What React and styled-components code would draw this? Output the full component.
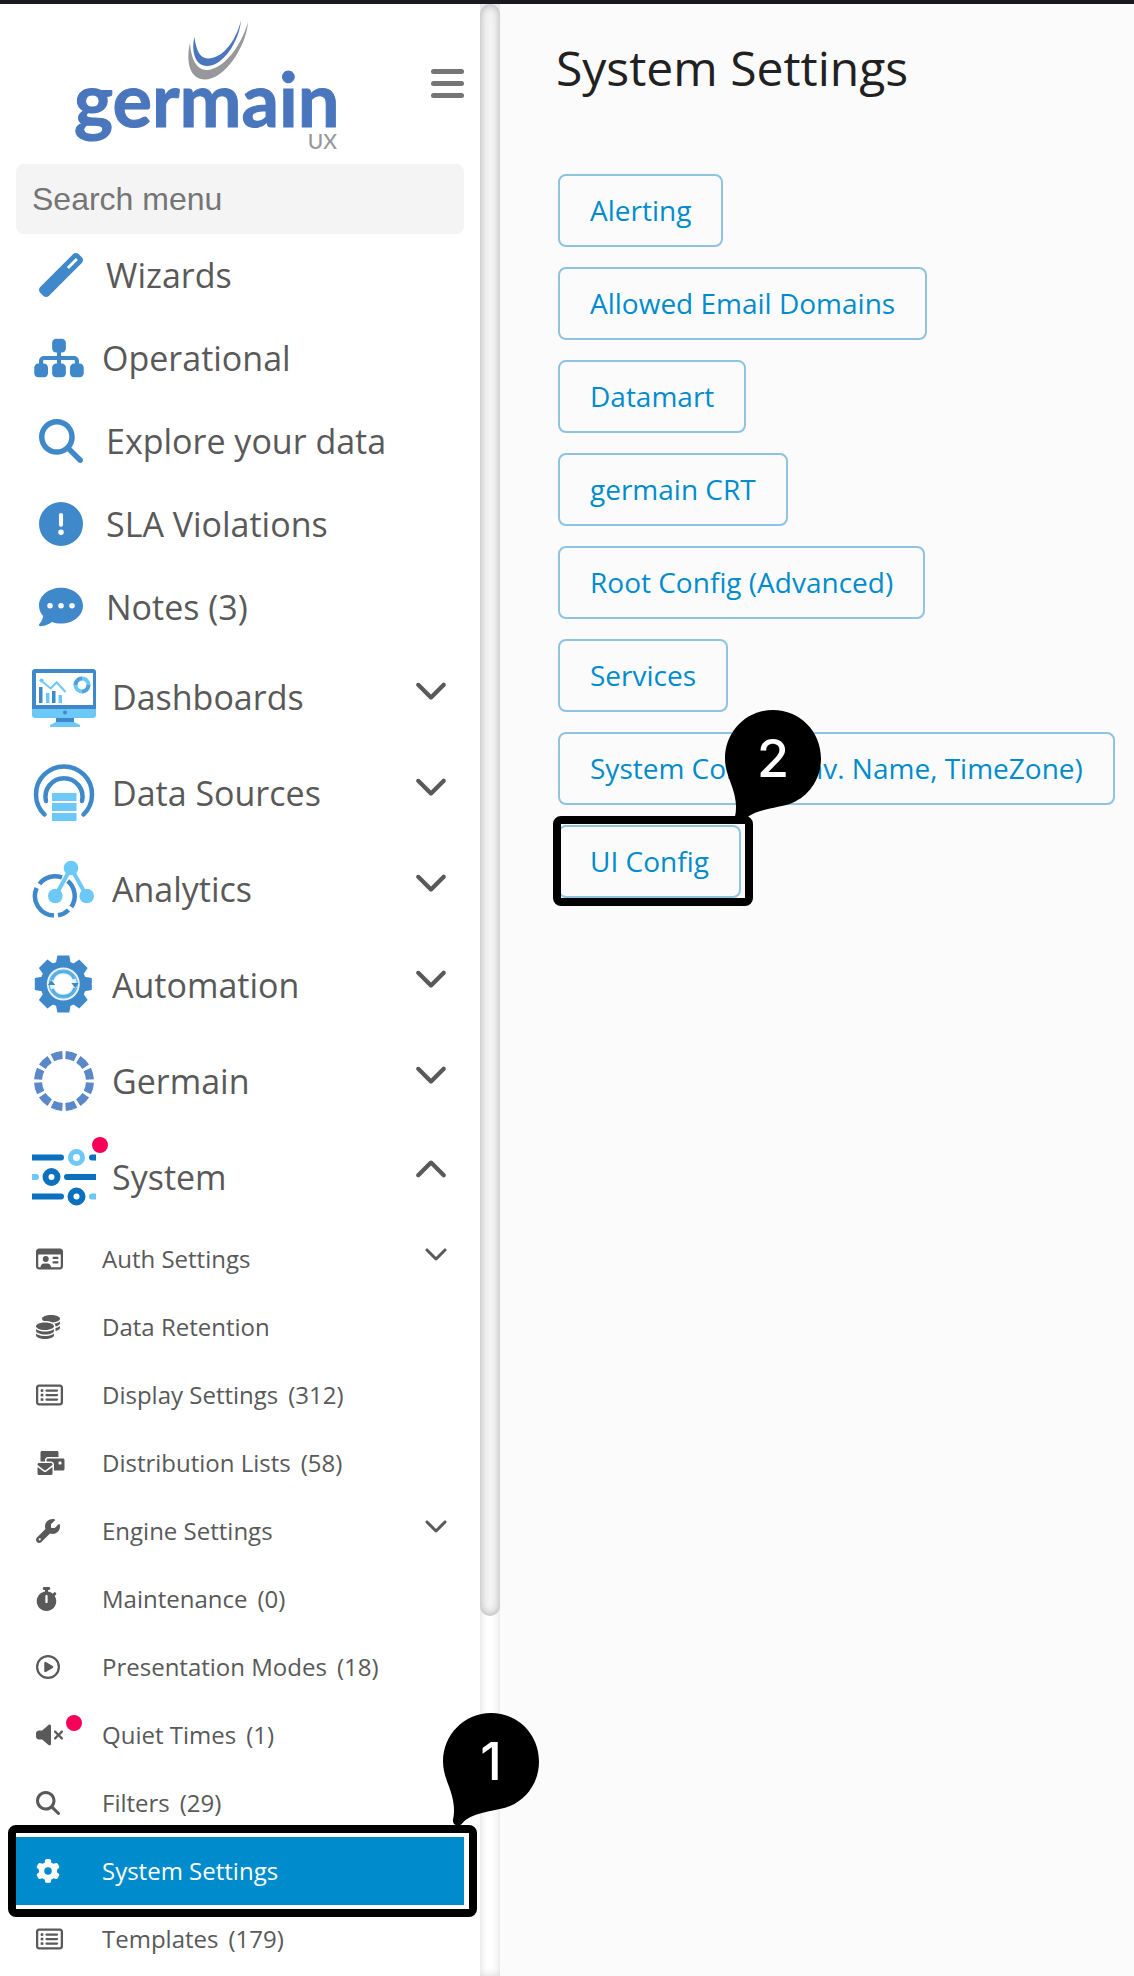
import React from "react";
import styled, { createGlobalStyle } from "styled-components";
import {
  FaWandMagic,
  FaSitemap,
  FaMagnifyingGlass,
  FaCircleExclamation,
  FaCommentDots,
  FaRegIdCard,
  FaCoins,
  FaRegRectangleList,
  FaEnvelopesBulk,
  FaWrench,
  FaStopwatch,
  FaRegCirclePlay,
  FaVolumeXmark,
  FaGear,
  FaChevronDown,
  FaChevronUp,
} from "react-icons/fa6";

const color = {
  ink: "#595959",
  title: "#212121",
  icon: "#3f89cb",
  light: "#6cc8f6",
  deep: "#0b70be",
  accent: "#008ccc",
  outline: "#8fc3e2",
  alert: "#f6005a",
  surface: "#fbfbfb",
};

const GlobalStyle = createGlobalStyle`
  *, *::before, *::after { box-sizing: border-box; }
  body {
    margin: 0;
    background: ${color.surface};
    color: ${color.ink};
    font-family: "Open Sans", "Noto Sans", sans-serif;
  }
  ul { list-style: none; margin: 0; padding: 0; }
  button { font: inherit; color: inherit; cursor: pointer; }
`;

const Page = styled.div`
  display: flex;
  min-height: 100vh;
  border-top: 4px solid #1a191f;
`;

const Sidebar = styled.aside`
  flex: 0 0 480px;
  padding: 0 16px;
  background: #fff;
`;

const ScrollTrack = styled.div`
  flex: 0 0 20px;
  background: #fff;
  box-shadow: inset 0 0 8px rgba(0, 0, 0, 0.16);
`;

const ScrollThumb = styled.div`
  height: calc(100% - 360px);
  border-radius: 10px;
  background: #f3f3f3;
  box-shadow: inset 0 0 8px rgba(0, 0, 0, 0.3);
`;

const Header = styled.header`
  display: flex;
  align-items: center;
  justify-content: space-between;
  height: 160px;
  padding: 0 0 1px 56px;
`;

const MenuButton = styled.button`
  display: flex;
  flex-direction: column;
  gap: 7px;
  padding: 0;
  border: 0;
  background: none;
`;

const MenuBar = styled.span`
  width: 33px;
  height: 5px;
  border-radius: 3px;
  background: #757575;
`;

const Search = styled.input`
  display: block;
  width: 100%;
  height: 70px;
  padding: 0 16px;
  border: 0;
  border-radius: 8px;
  background: #f4f4f4;
  color: ${color.ink};
  font: 32px "Liberation Sans", Arial, sans-serif;
  &::placeholder { color: #757575; opacity: 1; }
`;

const TopLink = styled.a`
  display: flex;
  align-items: center;
  gap: 18px;
  height: 83px;
  padding: 0 0 1px 18px;
  color: inherit;
  font-size: 34px;
  text-decoration: none;
`;

const TopIcon = styled.span`
  display: flex;
  padding: 0 ${(p) => (p.$wide ? 0 : 5)}px;
  color: ${color.icon};
  svg { width: ${(p) => (p.$wide ? 50 : 44)}px; height: 44px; }
`;

const GroupButton = styled.button`
  display: flex;
  align-items: center;
  gap: 16px;
  width: 100%;
  height: 96px;
  padding: 0 16px;
  border: 0;
  background: none;
  font-size: 34px;
  text-align: left;
`;

const GroupIcon = styled.span`
  position: relative;
  display: flex;
  svg { width: 64px; height: 64px; }
`;

const Dot = styled.span`
  position: absolute;
  top: -8px;
  left: ${(p) => p.$left}px;
  width: 16px;
  height: 16px;
  border-radius: 50%;
  background: ${color.alert};
`;

const Caret = styled.span`
  display: flex;
  margin-left: auto;
  padding-bottom: ${(p) => p.$lift}px;
  svg { width: ${(p) => p.$size}px; height: ${(p) => p.$size}px; }
`;

const SubLink = styled.a`
  position: relative;
  display: flex;
  align-items: center;
  gap: 10px;
  height: 68px;
  padding: 0 16px 0 20px;
  background: ${(p) => (p.$active ? color.accent : "transparent")};
  color: ${(p) => (p.$active ? "#fff" : "inherit")};
  font-size: 24px;
  line-height: 32px;
  text-decoration: none;
`;

const SubIcon = styled.span`
  position: relative;
  display: flex;
  width: 56px;
  svg { width: ${(p) => p.$width}px; height: 24px; }
`;

const Main = styled.main`
  flex: 1;
  min-width: 0;
  padding: 32px 20px 32px 56px;
`;

const Title = styled.h1`
  margin: 0 0 74px;
  color: ${color.title};
  font-size: 48px;
  font-weight: 400;
  line-height: 64px;
`;

const ButtonList = styled.ul`
  display: flex;
  flex-direction: column;
  align-items: flex-start;
  gap: 20px;
  margin-left: 2px;
`;

const ButtonItem = styled.li`
  position: relative;
  display: flex;
`;

const SettingButton = styled.button`
  height: 73px;
  padding: 0 30px 1px;
  border: 2px solid ${color.outline};
  border-radius: 8px;
  background: ${color.surface};
  color: ${color.accent};
  font-size: 28px;
  white-space: nowrap;
`;

const Frame = styled.span`
  position: absolute;
  inset: ${(p) => p.$inset};
  z-index: 2;
  border: 8px solid #000;
  border-radius: 8px;
  pointer-events: none;
`;

const Pin = styled.span`
  position: absolute;
  top: ${(p) => p.$top}px;
  right: ${(p) => p.$right}px;
  display: flex;
  width: 97px;
  height: 114px;
  text {
    font: 500 52px Inter, Roboto, sans-serif;
  }
`;

function Callout({ number, inset, top, right }) {
  return (
    <Frame $inset={inset}>
      <Pin $top={top} $right={right}>
        <svg width="97" height="114" viewBox="0 0 97 114">
          <path d="M48 0C75 0 96 21.500 96 48.500C96 69 84 86 67 93C55 98 35 98 22.500 107C19.500 109.500 18.500 112.500 15 112.500C11 112.500 9.500 109.500 10 106.500C11.500 100 11.500 93 9 83C6 71 0 62 0 48.500C0 21.500 21.500 0 48 0Z" />
          <text x="48" y="67" textAnchor="middle" fill="#fff">{number}</text>
        </svg>
      </Pin>
    </Frame>
  );
}

function Logo() {
  return (
    <svg width="272" height="137" viewBox="72 15 272 137" role="img" aria-label="germain UX">
      <path fill="#4a76bd" d="M241 20.500C239 42 223 66 207 66C195 66 191 51 194.500 37C196 50 200 58.500 208 58.500C221 58.500 235 44 241 20.500Z" />
      <path fill="#97989c" d="M248 22C246 48 224 79.500 205 79.500C190 79.500 185.500 62 190 43C191 58 196 70 207 70C223 69.500 241 47 248 22Z" />
      <text x="74" y="127" fill="#4a76bd" stroke="#4a76bd" strokeWidth="1" fontFamily="Lato, sans-serif" fontWeight="700" fontSize="74">germain</text>
      <text x="337" y="149" textAnchor="end" fill="#97989c" fontFamily="Lato, sans-serif" fontWeight="500" fontSize="21">UX</text>
    </svg>
  );
}

function DashboardIcon() {
  return (
    <svg viewBox="0 0 64 64">
      <path fill={color.icon} d="M3 4H61Q64 4 64 7V45H0V7Q0 4 3 4Z" />
      <rect x="4" y="8" width="57" height="32" fill="#fff" />
      <path fill={color.light} d="M0 44H64V50Q64 53 61 53H3Q0 53 0 50Z" />
      <circle cx="33" cy="47.500" r="2" fill={color.icon} />
      <rect x="24" y="53" width="18" height="5" fill={color.icon} />
      <path fill={color.light} d="M24 57H42L48 60V62H18V60Z" />
      <path fill={color.icon} d="M7 22h3.500v16H7zM20 26h3.500v12H20z" />
      <path fill={color.light} d="M14 28h3.500v10H14zM26.500 30H30v8h-3.500z" />
      <path d="M9.500 16L18.700 23.500L24.700 17.300L33.500 27" fill="none" stroke={color.light} strokeWidth="2" />
      <circle cx="9.500" cy="15.500" r="2" fill={color.light} />
      <circle cx="50" cy="20" r="6.500" fill="none" stroke={color.light} strokeWidth="4" />
      <path d="M43.500 20A6.500 6.500 0 0 1 50 13.500M56.500 20A6.500 6.500 0 0 1 50 26.500" fill="none" stroke={color.icon} strokeOpacity="0.6" strokeWidth="4" />
    </svg>
  );
}

function SourcesIcon() {
  return (
    <svg viewBox="0 0 64 64">
      <g fill="none" stroke={color.icon} strokeWidth="4.500" strokeLinecap="round">
        <path d="M12.500 53.500A28 28 0 1 1 51.500 53.500" />
        <path d="M14 40A18.500 18.500 0 1 1 50 40" />
      </g>
      <path fill={color.light} d="M20 32h24.500v8H20zM20 42h24.500v8H20zM20 52h24.500v8H20z" />
    </svg>
  );
}

function AnalyticsIcon() {
  return (
    <svg viewBox="0 0 64 64">
      <g fill="none" stroke={color.icon} strokeWidth="4.500">
        <path d="M7.500 27A19.500 19.500 0 0 1 30 20.500" />
        <path d="M4.700 31A19.500 19.500 0 0 0 22 58.500" />
        <path d="M26 58.300A19.500 19.500 0 0 0 36.500 53" />
        <path d="M39.300 50A19.500 19.500 0 0 0 35.700 24" />
      </g>
      <path d="M23.300 39L39 11L54.700 39" fill="none" stroke={color.light} strokeWidth="4" />
      <g fill={color.light}>
        <circle cx="39" cy="11" r="7.300" />
        <circle cx="23.300" cy="39" r="7.300" />
        <circle cx="54.700" cy="39" r="7.300" />
      </g>
    </svg>
  );
}

function AutomationIcon() {
  return (
    <svg viewBox="0 0 64 64">
      <g transform="translate(31.300 31)">
        <g fill={color.icon}>
          <circle r="23" />
          {[0, 45, 90, 135, 180, 225, 270, 315].map((a) => (
            <path key={a} transform={`rotate(${a})`} d="M-7.500 -20L-6 -28.500H6L7.500 -20Z" />
          ))}
        </g>
        <circle r="16.500" fill="#e8f4fc" />
        <circle r="14.500" fill="#55a6de" />
        <circle r="13.500" fill="#e8f4fc" />
        <circle r="9.500" fill="#fff" />
        <path d="M-11.500 -4A12 12 0 0 1 11 -5M11.500 4A12 12 0 0 1 -11 5" fill="none" stroke="#55afe6" strokeWidth="3" />
        <path d="M8 -1H15.500L12 4ZM-8 1H-15.500L-12 -4Z" fill={color.icon} />
      </g>
    </svg>
  );
}

function GermainIcon() {
  return (
    <svg viewBox="0 0 64 64">
      <circle cx="32" cy="32" r="26" fill="none" stroke="#5b88c9" strokeWidth="8" pathLength="360" strokeDasharray="23 7" strokeDashoffset="-3.500" />
    </svg>
  );
}

function SystemIcon() {
  return (
    <svg viewBox="0 0 64 64">
      <g fill="none" strokeWidth="6" strokeLinecap="round" stroke={color.deep}>
        <path d="M-4 12.500H29M60 12.500H70M35 32H70M-4 51.500H29" />
        <path stroke={color.light} d="M-4 32H4M60 51.500H70" />
        <circle cx="44.500" cy="12.500" r="6" stroke={color.light} strokeWidth="5" />
        <circle cx="19.500" cy="32" r="6" />
        <circle cx="44.500" cy="51.500" r="6" />
      </g>
    </svg>
  );
}

const topLinks = [
  { label: "Wizards", Icon: FaWandMagic },
  { label: "Operational", Icon: FaSitemap, wide: true },
  { label: "Explore your data", Icon: FaMagnifyingGlass },
  { label: "SLA Violations", Icon: FaCircleExclamation },
  { label: "Notes (3)", Icon: FaCommentDots },
];

const groups = [
  { label: "Dashboards", Icon: DashboardIcon },
  { label: "Data Sources", Icon: SourcesIcon },
  { label: "Analytics", Icon: AnalyticsIcon },
  { label: "Automation", Icon: AutomationIcon },
  { label: "Germain", Icon: GermainIcon },
  { label: "System", Icon: SystemIcon, open: true, alert: true },
];

const systemLinks = [
  { label: "Auth Settings", Icon: FaRegIdCard, width: 27, expandable: true },
  { label: "Data Retention", Icon: FaCoins },
  { label: "Display Settings", count: 312, Icon: FaRegRectangleList, width: 27 },
  { label: "Distribution Lists", count: 58, Icon: FaEnvelopesBulk, width: 30 },
  { label: "Engine Settings", Icon: FaWrench, expandable: true },
  { label: "Maintenance", count: 0, Icon: FaStopwatch, width: 21 },
  { label: "Presentation Modes", count: 18, Icon: FaRegCirclePlay },
  { label: "Quiet Times", count: 1, Icon: FaVolumeXmark, width: 27, alert: true },
  { label: "Filters", count: 29, Icon: FaMagnifyingGlass },
  { label: "System Settings", Icon: FaGear, active: true },
  { label: "Templates", count: 179, Icon: FaRegRectangleList, width: 27 },
];

const settings = [
  "Alerting",
  "Allowed Email Domains",
  "Datamart",
  "germain CRT",
  "Root Config (Advanced)",
  "Services",
  "System Config (Env. Name, TimeZone)",
  "UI Config",
];

function SystemMenu() {
  return (
    <ul>
      {systemLinks.map(({ label, count, Icon, width = 24, expandable, alert, active }) => (
        <li key={label}>
          <SubLink href="#" $active={active} aria-current={active ? "page" : undefined}>
            <SubIcon $width={width}>
              <Icon />
              {alert && <Dot $left={30} />}
            </SubIcon>
            <span>{label}</span>
            {count !== undefined && <span>({count})</span>}
            {expandable && <Caret $size={24} $lift={12}><FaChevronDown /></Caret>}
            {active && <Callout number="1" inset="-12px -13px -12px -8px" top={-120} right={-71} />}
          </SubLink>
        </li>
      ))}
    </ul>
  );
}

export default function App() {
  return (
    <>
      <GlobalStyle />
      <Page>
        <Sidebar>
          <Header>
            <Logo />
            <MenuButton type="button" aria-label="Toggle menu">
              <MenuBar />
              <MenuBar />
              <MenuBar />
            </MenuButton>
          </Header>
          <Search type="search" placeholder="Search menu" aria-label="Search menu" />
          <nav aria-label="Main">
            <ul>
              {topLinks.map(({ label, Icon, wide }) => (
                <li key={label}>
                  <TopLink href="#">
                    <TopIcon $wide={wide}><Icon /></TopIcon>
                    {label}
                  </TopLink>
                </li>
              ))}
              {groups.map(({ label, Icon, open, alert }) => (
                <li key={label}>
                  <GroupButton type="button" aria-expanded={!!open}>
                    <GroupIcon>
                      <Icon />
                      {alert && <Dot $left={60} />}
                    </GroupIcon>
                    {label}
                    <Caret $size={34} $lift={open ? 12 : 16}>
                      {open ? <FaChevronUp /> : <FaChevronDown />}
                    </Caret>
                  </GroupButton>
                  {open && <SystemMenu />}
                </li>
              ))}
            </ul>
          </nav>
        </Sidebar>
        <ScrollTrack>
          <ScrollThumb />
        </ScrollTrack>
        <Main>
          <Title>System Settings</Title>
          <ButtonList>
            {settings.map((label) => (
              <ButtonItem key={label}>
                <SettingButton type="button">{label}</SettingButton>
                {label === "UI Config" && (
                  <Callout number="2" inset="-9px -12px -8px -5px" top={-114} right={-77} />
                )}
              </ButtonItem>
            ))}
          </ButtonList>
        </Main>
      </Page>
    </>
  );
}
